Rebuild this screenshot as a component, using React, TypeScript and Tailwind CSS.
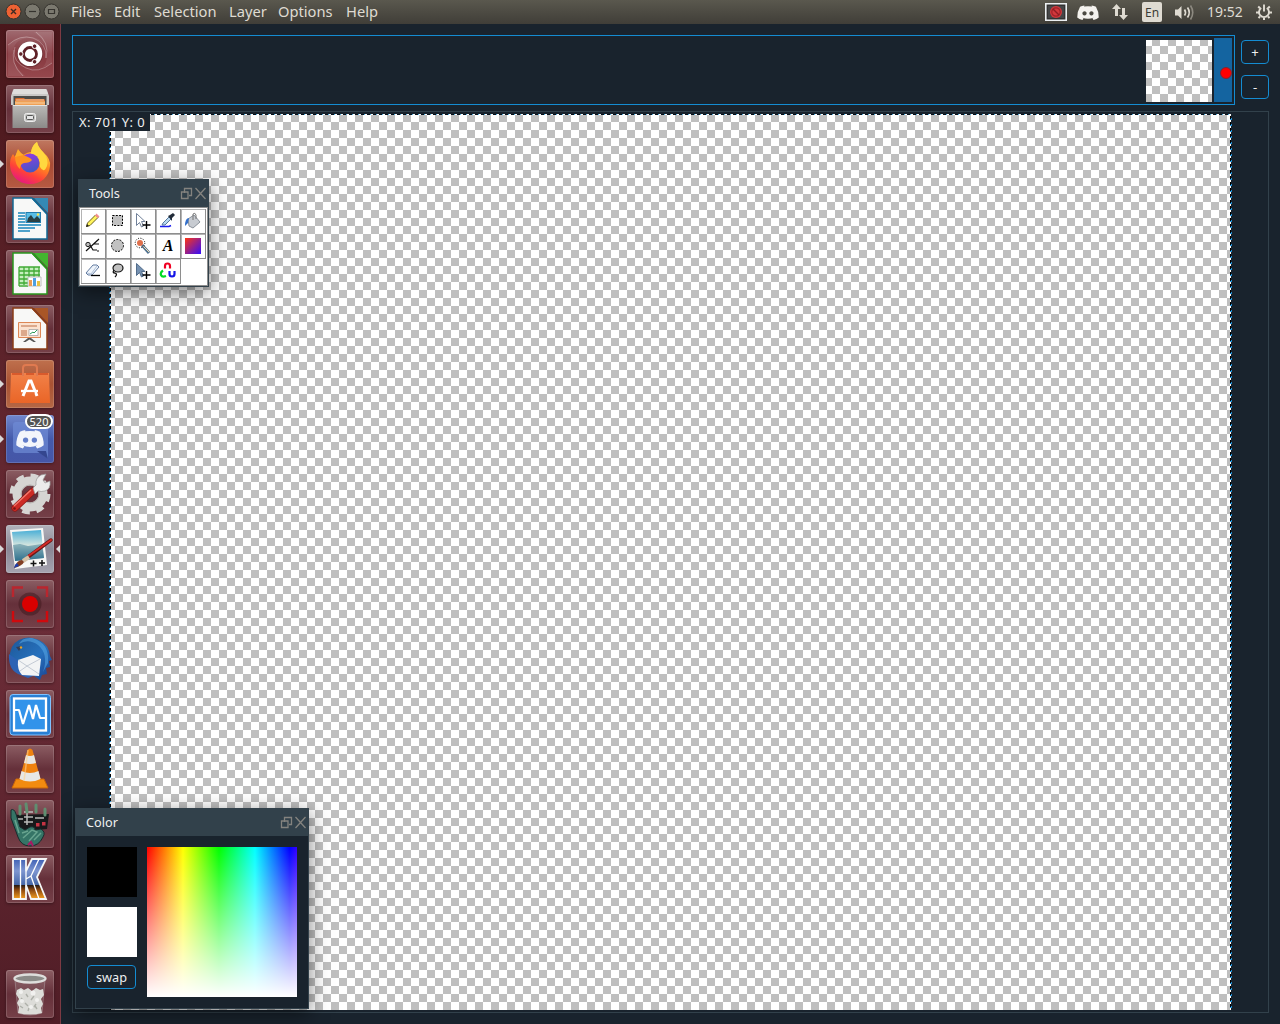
import React from "react";

const menus = [
  { label: "Files", w: "w-[43px]" },
  { label: "Edit", w: "w-[40px]" },
  { label: "Selection", w: "w-[75px]" },
  { label: "Layer", w: "w-[49px]" },
  { label: "Options", w: "w-[68px]" },
  { label: "Help", w: "w-[40px]" },
];

function Svg({ children, box = "0 0 48 48", className = "size-full" }: { children: React.ReactNode; box?: string; className?: string }) {
  return (
    <svg viewBox={box} className={className} fill="none">
      {children}
    </svg>
  );
}

function Ubuntu() {
  return (
    <Svg>
      <path d="M2 15Q12 5 24 7q16 1 17 17 0 9-4 13 8-2 9-4V2H28q9 7 12 15-7-10-18-9Q7 9 7 24q0 12 12 22H2z" fill="#fff" fillOpacity=".08" />
      <g stroke="#fff" strokeOpacity=".28" strokeWidth="1">
        <path d="M2 15Q14 4 27 8q14 5 13 20" />
        <path d="M46 33Q32 44 20 38 7 32 8 20" />
        <path d="M17 46Q3 33 9 17M30 2q14 10 10 26" />
      </g>
      <circle cx="24" cy="24.300" r="13" fill="#40191d" fillOpacity=".35" />
      <circle cx="24" cy="23.700" r="12.300" fill="#fff" />
      <circle cx="24" cy="24" r="6.500" stroke="#5e2027" strokeWidth="2.800" />
      <g fill="#5e2027" stroke="#fff" strokeWidth="1">
        <circle cx="14.800" cy="24" r="2.300" /><circle cx="28.600" cy="16.200" r="2.300" /><circle cx="28.600" cy="31.800" r="2.300" />
      </g>
    </Svg>
  );
}

function Drawer() {
  return (
    <Svg>
      <path d="M7 5q0-1 2-1h30q2 0 2 1l2 6v9H5v-9z" fill="#c9c8c6" />
      <path d="M6 9 8 4h32l2 5z" fill="#dfdedc" />
      <path d="M7.500 11h33v10h-33z" fill="#4c4c49" />
      <path d="M9 14q0-1 2-1h7l1 1h18q2 0 2 1v6H9z" fill="#d96a2c" />
      <path d="M9 16h30v5H9z" fill="#f0a055" /><path d="M9 18h30M10 15h28" stroke="#f8d2a6" />
      <path d="M6.500 20h35v23h-35z" fill="url(#drawerFront)" /><path d="M7 20.500h34" stroke="#e4e4e2" />
      <rect x="18.500" y="28.500" width="11" height="8" rx="2" fill="#c7c7c5" stroke="#eee" /><rect x="20.500" y="30.500" width="7" height="4" rx="1" fill="#e5e5e5" stroke="#555" />
      <defs><linearGradient id="drawerFront" x1="0" y1="0" x2="0" y2="1"><stop stopColor="#bbbab8" /><stop offset="1" stopColor="#8b8a88" /></linearGradient></defs>
    </Svg>
  );
}

function Firefox() {
  return (
    <Svg>
      <path d="M24 44C12 44 4 35 4 24q0-6 3-10l2 3 3-7 5 5q5-3 8-3 1-7 6-10 1 5 6 10 8 7 7 14C43 37 35 44 24 44z" fill="url(#foxFlame)" />
      <path d="M31 2q-6 5-6 12 10 3 9 13 4 7 7-1 2-7-4-14-5-5-6-10z" fill="#ffd83f" />
      <circle cx="24" cy="23" r="9.500" fill="url(#foxGlobe)" />
      <path d="M9 16q7-3 15 2l2 2q-2 3-8 3-4 1-4 6-5-4-5-13z" fill="#ff9420" />
      <path d="M12 9q2 4 6 6l-9 2z" fill="#ffad2a" />
      <defs>
        <linearGradient id="foxFlame" x1="34" y1="6" x2="15" y2="44" gradientUnits="userSpaceOnUse"><stop stopColor="#ffdd3c" /><stop offset=".4" stopColor="#ff8a20" /><stop offset=".7" stopColor="#ff4238" /><stop offset="1" stopColor="#e31587" /></linearGradient>
        <linearGradient id="foxGlobe" x1="0" y1="0" x2=".3" y2="1"><stop stopColor="#9a38e6" /><stop offset="1" stopColor="#4756c4" /></linearGradient>
      </defs>
    </Svg>
  );
}

function Doc({ edge, corner, children }: { edge: string; corner: string; children: React.ReactNode }) {
  return (
    <Svg>
      <path d="M7 3h19l15 16v25H7z" fill="#f8f8f7" stroke={edge} strokeWidth="1.500" />
      <path d="M28 3h14v15z" fill={corner} />
      <path d="M26 3v1l15 16v-2L28 3z" fill={edge} />
      {children}
    </Svg>
  );
}

function Writer() {
  return (
    <Doc edge="#126894" corner="#3489b5">
      <path d="M12 18h7M12 21h7M12 24h7M12 27h7M12 30h23M12 33h17M12 36h12" stroke="#1685bd" strokeWidth="1.300" />
      <rect x="20" y="17.500" width="14.500" height="10" fill="#58bde6" stroke="#217cad" /><path d="m21 27 1-4 3-3 3 4 3-3 3 3v3z" fill="#294044" /><circle cx="32" cy="19.500" r="1.200" fill="#ffe34a" />
    </Doc>
  );
}

function Calc() {
  return (
    <Doc edge="#2a961e" corner="#43b52f">
      <path d="M13 17h20v18H13z" fill="#c6efbd" /><path d="M13 17h21M13 21h21M13 25h21M13 29h12M13 33h12M13 36h9M13 17v19M18 17v18M23 17v18M28 17v10M33 17v10" stroke="#41aa36" strokeWidth="1.300" />
      <path d="M22 27h13v9H22z" fill="#fff" stroke="#bbb" /><path d="M23 30h3v6h-3z" fill="#ee9c54" /><path d="M27 28h3v8h-3z" fill="#4f9fe0" /><path d="M31 31h3v5h-3z" fill="#e8c145" />
    </Doc>
  );
}

function Impress() {
  return (
    <Doc edge="#8b3c17" corner="#a95626">
      <path d="M12.500 17.500h22v15h-22z" fill="#fbe2d0" stroke="#dd8755" /><path d="M15 21h16M15 26h6M15 28h6M15 30h6" stroke="#be6f46" strokeWidth="1.200" /><path d="M23 24.500h9v6h-9z" fill="#fff" stroke="#999" strokeWidth=".7" /><path d="m24 29 3-2 1 1 3-3" stroke="#2d9c57" /><path d="M22 33h3l5 4h-2.500l-4-2.500-4 2.500H17z" fill="#555" />
    </Doc>
  );
}

function Bag() {
  return (
    <Svg>
      <path d="M5 13h38l1 30H4z" fill="url(#bagFill)" /><path d="M17 16V8q0-3 3-3h8q3 0 3 3v8" stroke="#e07a50" strokeWidth="2" /><path d="M6 14h10m4 0h8m4 0h10" stroke="#d95a2c" strokeWidth="2" />
      <path d="m17 36 6-15h2l6 15" stroke="#fff" strokeWidth="3" /><path d="M15 31h17" stroke="#fff" strokeWidth="2.400" /><path d="M20 33h9" stroke="#e9733b" />
      <defs><linearGradient id="bagFill" x1="0" y1="0" x2="0" y2="1"><stop stopColor="#f28148" /><stop offset="1" stopColor="#e96527" /></linearGradient></defs>
    </Svg>
  );
}

function DiscordFace({ className }: { className: string }) {
  return (
    <svg viewBox="0 0 28 20" className={className}>
      <path fill="currentColor" fillRule="evenodd" d="M9.500 1 8.900 2.300q5-.8 10.200 0L18.500 1q3.400.4 5.600 1.800 3.800 6.200 3.600 13.500-2.500 2.400-6.600 3.200l-1.500-2.200 2-1q-7.600 3.200-15.200 0l2 1-1.500 2.200q-4.100-.8-6.600-3.200Q.1 9 3.900 2.800 6.100 1.400 9.500 1zM9.600 8.500c-3.600 0-3.600 5.300 0 5.300s3.600-5.300 0-5.300zm8.800 0c-3.600 0-3.600 5.300 0 5.300s3.600-5.300 0-5.300z" />
    </svg>
  );
}

function Discord() {
  return (
    <div className="relative size-full text-[#f3f5fb]">
      <Svg><path d="M8 7h31q3 0 3 3v34l-7-6H10q-3 0-3-3V10q0-3 3-3z" fill="#6f8cd6" fillOpacity=".7" /><path d="M31 36h9l2 8-7-5z" fill="#34468f" /></Svg>
      <DiscordFace className="absolute left-[10px] top-[14px] h-[20px] w-[28px]" />
      <div className="absolute left-[19px] top-[-1px] flex h-[15px] w-[28px] items-center justify-center rounded-full border-2 border-white bg-[#555553] text-[11px] leading-none text-white">520</div>
    </div>
  );
}

function Settings() {
  return (
    <Svg>
      <circle cx="24" cy="24" r="13" stroke="#d6d5d3" strokeWidth="9" /><circle cx="24" cy="24" r="18" stroke="#d6d5d3" strokeWidth="5" strokeDasharray="7.500 6.640" /><circle cx="24" cy="24" r="9" stroke="#b4b1ae" />
      <path d="m9 38 18-17" stroke="#8e1613" strokeWidth="7" strokeLinecap="round" /><path d="m9 38 18-17" stroke="#cc2b25" strokeWidth="5.500" strokeLinecap="round" /><path d="m8 36 17-16" stroke="#f3796c" strokeWidth="1.300" />
      <path d="m27 18 3-3q-1-7 5-10l5-1-3 6 2 3 5-2q1 8-5 10-4 1-7 0l-3 3z" fill="#ececeb" stroke="#999" strokeWidth=".7" /><circle cx="8.500" cy="38.500" r="1.300" fill="#771512" />
    </Svg>
  );
}

function PaintPicture() {
  return (
    <Svg>
      <path d="m4 5 33-2 4 37-32 4z" fill="#f7f7f5" /><path d="m6 7 29-2 3 28-29 3z" fill="url(#sea)" /><path d="m7 20 7-1 8 2 14-2 2 14-29 3z" fill="#34758f" fillOpacity=".5" />
      <path d="M22 32 45 15" stroke="#6d1816" strokeWidth="3.500" strokeLinecap="round" /><path d="M23 30.500 45 15" stroke="#d62c27" strokeWidth="1.800" strokeLinecap="round" />
      <path d="m17 36 6-4" stroke="#d6c3a9" strokeWidth="4" /><path d="M8 43q3-8 8-8l2 2q-2 4-10 6z" fill="#823e22" /><path d="M8 43q1-4 3-5l2 3z" fill="#1e3eac" />
      <path d="M24.500 38.500h6M27.500 35.500v6M33 38h6M36 35v6" stroke="#111" strokeWidth="1.500" />
      <defs><linearGradient id="sea" x1="0" y1="0" x2="0" y2="1"><stop stopColor="#4aafd6" /><stop offset=".5" stopColor="#d7e6df" /><stop offset="1" stopColor="#2b6a8b" /></linearGradient></defs>
    </Svg>
  );
}

function Recorder() {
  return (
    <Svg>
      <circle cx="24" cy="24" r="11.500" fill="#3e171c" fillOpacity=".5" /><circle cx="24" cy="24" r="8" fill="#d90000" /><path d="M7 17V7.500h10M31 7.500h10V17" stroke="#b9262e" strokeWidth="2.400" /><path d="M41 31v10H31M17 41H7V31" stroke="#cf0a0e" strokeWidth="2.400" />
    </Svg>
  );
}

function Thunderbird() {
  return (
    <Svg>
      <path d="M4 24Q3 10 13 5 22 0 33 5q10 5 11 16l2 4-3 1 1 6-4 1 1 6-5 1-2 5-6-4z" fill="url(#bird)" /><path d="M13 9q9-6 19 1 11 9 5 27l5-9Q44 8 26 3q-10-1-13 6z" fill="#5eb0ec" fillOpacity=".5" />
      <path d="M3 19q-1 15 9 20l10 4 10-4-12-8z" fill="#2c62b4" />
      <path d="m12 25 15-5 8 4-2 17-17-1q-5-5-4-15z" fill="#f3f4f5" /><path d="m12 25 9 6 13-7M14 36l7-5 12 8" stroke="#b7bfcb" strokeWidth=".8" /><path d="m10 12 6-1-3 5z" fill="#343d55" /><circle cx="15" cy="12.500" r="1.200" fill="#e6a52a" />
      <defs><linearGradient id="bird" x1="0" y1="0" x2="1" y2="1"><stop stopColor="#1d5798" /><stop offset=".55" stopColor="#2771bd" /><stop offset="1" stopColor="#173e8d" /></linearGradient></defs>
    </Svg>
  );
}

function Monitor() {
  return (
    <Svg>
      <rect x="4" y="4.500" width="40.500" height="40.500" rx="3" fill="#287fd4" stroke="#7fc2ff" /><rect x="8" y="8.500" width="32" height="32" fill="#3293ea" stroke="#fff" strokeWidth="2.300" /><path d="M8 20h5l4 14 6-19 4 14 3-14 4 13h6" stroke="#fff" strokeWidth="2.200" strokeLinejoin="bevel" />
    </Svg>
  );
}

function Cone() {
  return (
    <Svg>
      <path d="m10 34-4 9h36l-4-9z" fill="#f28b10" stroke="#c96508" /><path d="M21.500 5q2.500-3 5 0l8 29q-10.500 5-21 0z" fill="#ef8210" /><path d="m20 10-2 8q6 2 12 0l-2-8q-4 2-8 0zM15.500 26l-2 8q10.500 5 21 0l-2-8q-8.500 4-17 0z" fill="#e7e7e5" /><path d="m22 5-4 31" stroke="#ffd18d" strokeWidth="1.500" strokeOpacity=".6" />
    </Svg>
  );
}

function Hand() {
  return (
    <Svg>
      <path d="m5 15 38-1-2 15-27 2z" fill="#18191b" /><path d="M18 12h9M18 17h9M18 22h9M21 10v15M12 19h5M29 18h9" stroke="#b9bab9" strokeWidth="1.500" /><path d="M30 23h3.500v3.500H30zM36 22h3.500v3.500H36z" fill="#c63343" />
      <path d="M5 10q3-2 5 4l4 13 5 3 5-3q5-1 5 3l6-1q5 3 2 8-4 9-13 9-9 0-12-9L5 18z" fill="#357466" stroke="#182c2d" /><path d="M14 6v8M20 4l1 8M30 5v7M39 9v6" stroke="#608e70" strokeWidth="3" strokeLinecap="round" /><path d="m17 38 9-8 5 2-8 9M9 20l4 13M16 33l6-2M28 40l7-7" stroke="#68a48f" strokeWidth="1.500" /><path d="m22 45 3-3 2 4" stroke="#a61b62" strokeWidth="2" />
    </Svg>
  );
}

function LetterMark() {
  return (
    <Svg>
      <path d="M7 4h13v12l6-12h14l-9 18 9 22H25l-5-14v14H7z" fill="url(#markFill)" stroke="#f5f7f7" strokeWidth="1.800" /><path d="M14.500 4v40M20 16v14M20 24l5-3 8-17M25 21l8 23" stroke="#fff" strokeWidth="1.300" />
      <defs><linearGradient id="markFill" x1="0" y1="4" x2="0" y2="44" gradientUnits="userSpaceOnUse"><stop stopColor="#3f61b5" /><stop offset=".3" stopColor="#7d95d0" /><stop offset=".64" stopColor="#4768a8" /><stop offset=".65" stopColor="#201611" /><stop offset=".76" stopColor="#85430f" /><stop offset="1" stopColor="#f6a01f" /></linearGradient></defs>
    </Svg>
  );
}

function Trash() {
  return (
    <Svg>
      <path d="m9 10 3 33q12 4 24 0l3-33z" fill="#ddd" fillOpacity=".12" stroke="#ccc" strokeOpacity=".35" />
      <path d="m11 20 4-2 3 2 4-2 4 3 4-3 4 2 3-1 1 6-3 4 2 5-2 4 1 5q-12 3-24 0l1-6-2-4 2-4-3-5z" fill="#dcdcd8" />
      <path d="m20 24 2 3m6-1-3 4m-6 3 3 3m8-2-2 3m-13-9 2 2m12 6 2 3M14 36l3 2m6 0-1 3" stroke="#aeb0a9" strokeWidth="1.400" />
      <g fill="#f1f1ef"><circle cx="15" cy="22" r="2" /><circle cx="27" cy="23" r="2.500" /><circle cx="16" cy="31" r="2" /><circle cx="31" cy="30" r="2" /><circle cx="25" cy="37" r="2" /></g>
      <ellipse cx="24" cy="8.500" rx="15.500" ry="4" fill="#8b8b88" stroke="#dededc" strokeWidth="2.300" />
    </Svg>
  );
}

const glass = "bg-linear-to-b/srgb from-[#8b5d63] via-[#65303a] to-[#754048]";
const apps = [
  { icon: <Ubuntu />, bg: "bg-linear-to-b/srgb from-[#a06b71] via-[#86383f] to-[#96484d]" },
  { icon: <Drawer />, bg: glass },
  { icon: <Firefox />, bg: "bg-linear-to-b/srgb from-[#c07860] via-[#a84b35] to-[#b65a42]", run: true },
  { icon: <Writer />, bg: glass },
  { icon: <Calc />, bg: glass },
  { icon: <Impress />, bg: glass },
  { icon: <Bag />, bg: "bg-linear-to-b/srgb from-[#bf704d] via-[#a95233] to-[#b46745]", run: true },
  { icon: <Discord />, bg: "bg-linear-to-b/srgb from-[#7087cd] via-[#445aab] to-[#4656a7]", run: true },
  { icon: <Settings />, bg: glass },
  { icon: <PaintPicture />, bg: "bg-linear-to-b/srgb from-[#b2b2bb] via-[#8a8795] to-[#a6a4b0]", run: true, focus: true },
  { icon: <Recorder />, bg: glass },
  { icon: <Thunderbird />, bg: glass },
  { icon: <Monitor />, bg: glass },
  { icon: <Cone />, bg: glass },
  { icon: <Hand />, bg: glass },
  { icon: <LetterMark />, bg: glass },
];

function Tile({ icon, bg, run, focus }: { icon: React.ReactNode; bg: string; run?: boolean; focus?: boolean }) {
  return (
    <div className={"relative ml-[6px] size-12 shrink-0 rounded-[3px] shadow-[0_1px_3px_rgba(0,0,0,0.35),inset_0_0_0_1px_rgba(255,255,255,0.15)] " + bg}>
      {icon}
      {run && <span className="absolute -left-[6px] top-[20px] border-y-4 border-l-[4px] border-y-transparent border-l-[#d9d9d9]" />}
      {focus && <span className="absolute -right-[6px] top-[20px] border-y-4 border-r-[4px] border-y-transparent border-r-[#d9d9d9]" />}
    </div>
  );
}

function TopBar() {
  return (
    <header className="flex h-6 shrink-0 items-center bg-linear-to-b from-[#5a584e] to-[#403e38] pr-[7px] text-[14.7px] text-[#dfdbd2]">
      <div className="ml-[5px] flex gap-[2px] pb-px">
        <Svg box="0 0 17 17" className="size-[17px]"><circle cx="8.500" cy="8.500" r="7.500" fill="#ee6233" stroke="#35332e" /><path d="m6 6 5 5m0-5-5 5" stroke="#3c2b23" strokeWidth="1.400" /></Svg>
        <Svg box="0 0 17 17" className="size-[17px]"><circle cx="8.500" cy="8.500" r="7.500" fill="#7b796f" stroke="#35332e" /><path d="M5 8.500h7" stroke="#35332e" strokeWidth="1.200" /></Svg>
        <Svg box="0 0 17 17" className="size-[17px]"><circle cx="8.500" cy="8.500" r="7.500" fill="#7b796f" stroke="#35332e" /><path d="M5.500 6.500h6v4h-6z" stroke="#35332e" strokeWidth="1.200" /></Svg>
      </div>
      <nav className="ml-[11px] flex pb-[2px]">
        {menus.map((m) => <span key={m.label} className={"shrink-0 whitespace-nowrap " + m.w}>{m.label}</span>)}
      </nav>
      <div className="ml-auto flex items-center">
        <Svg box="0 0 22 18" className="h-[18px] w-[22px]"><path d="M.8.800h20.400v16.400H.800z" fill="#333" stroke="#eceff1" strokeWidth="1.600" /><path d="M3 3h16v12H3z" fill="#454647" /><circle cx="11" cy="9" r="6" fill="#d2383c" /><circle cx="11" cy="9" r="4.200" stroke="#a02228" strokeWidth="1.200" /><path d="m8 6 6 6" stroke="#8e1c22" strokeWidth="1.400" /></Svg>
        <DiscordFace className="ml-[10px] h-[17px] w-[22px] text-[#f4f2ee]" />
        <Svg box="0 0 18 18" className="ml-[12px] size-[18px]"><path d="M5.500 1 10 6H7v7H4V6H1zM12.500 17 8 12h3V5h3v7h3z" fill="#dfdbd2" /></Svg>
        <span className="ml-[13px] flex h-[20px] w-[20px] items-center justify-center rounded-[2px] bg-[#dfdbd2] pt-px text-[12px] text-[#3d3b36]">En</span>
        <Svg box="0 0 21 18" className="ml-[12px] h-[18px] w-[21px]"><path d="M1 6.500h3l3.500-3.500v13L4 12.500H1z" fill="#dfdbd2" /><path d="M10.500 6.500q2 3 0 6M13.500 4.500q3.500 5 0 10" stroke="#dfdbd2" strokeWidth="1.700" /><path d="M16.500 2.500q4.500 7 0 14" stroke="#8d8a81" strokeWidth="1.600" /></Svg>
        <span className="ml-[12px] w-[37px] whitespace-nowrap pb-[2px] text-[14px]">19:52</span>
        <Svg box="0 0 18 18" className="ml-[11px] size-[18px]"><path d="M6.200 5a5 5 0 1 0 5.600 0M9 1.500v7" stroke="#dfdbd2" strokeWidth="1.900" /><path d="M3.200 3.500 5 5.300M14.800 3.500 13 5.300M1 9.500h3M17 9.500h-3M3.500 15 5 13.500M14.500 15 13 13.500M9 17v-2" stroke="#dfdbd2" strokeWidth="2" /></Svg>
      </div>
    </header>
  );
}

const toolIcons: React.ReactNode[] = [
  <><path d="m2.500 14.500 1-3.500 8-8 2.500 2.500-8 8z" fill="#fff45c" stroke="#6c601c" /><path d="m11 3.500 1.500-2 3 3-2 1.500z" fill="#f28f8f" /><path d="m2 15 1-3 2 2z" fill="#222" /></>,
  <path d="M3.500 3.500h10v10h-10z" fill="#c1c1c1" stroke="#000" strokeDasharray="2 1.300" />,
  <><path d="M2.500 1.500v12l3-3 2 4.500 2-1-2-4.500h3.500z" fill="#fff" stroke="#718199" /><path d="M12.500 9v8M8.500 13h8" stroke="#000" strokeWidth="1.400" /></>,
  <><path d="m3 13 1-2 6-6 2 2-6 6z" fill="#b9d9f1" stroke="#54789d" /><path d="m9 4 2-1 3-2 2 2-3 3v3z" fill="#222c39" /><path d="M1 14.500h9l2-1" stroke="#1a1dee" strokeWidth="1.500" /></>,
  <><path d="m4 7 6-4 6 7-7 6-4-2z" fill="#c7cbd1" stroke="#8b929b" /><path d="M9 8V2q2-2 3 1v4" stroke="#777" /><path d="M5 6Q1 6 1 14l3-3z" fill="#3470ca" /></>,
  <><circle cx="4" cy="7.500" r="2.200" fill="#bbb" stroke="#222" /><path d="m2 14 13-12M6 8l3 5h4m0 1h2M10 7h5" stroke="#111" strokeWidth="1.200" /></>,
  <circle cx="8.500" cy="8.500" r="6" fill="#c1c1c1" stroke="#000" strokeDasharray="2 1.300" />,
  <><path d="m8 8 7 8" stroke="#537391" strokeWidth="3" /><path d="m9 9 6 6" stroke="#f4dfb0" /><circle cx="6" cy="6" r="4.800" stroke="#000" strokeDasharray="1 1.500" /><circle cx="6" cy="6" r="3" fill="#df704c" /></>,
  null,
  null,
  <><path d="m2 11 7-8q5-1 6 2l-7 8q-5 1-6-2z" fill="#eef4fb" stroke="#637ba0" /><path d="m3 11 4 1 6-8" stroke="#afc0d8" /><path d="M7 13.500h9" stroke="#000" strokeWidth="1.300" /></>,
  <><ellipse cx="9" cy="6" rx="5" ry="4" fill="#c1c1c1" stroke="#111" strokeWidth="1.200" /><path d="M5 8q-2 3 1 3 3 1 0 4" stroke="#111" strokeWidth="1.300" /></>,
  <><path d="M2.500 1.500v12l3-3 2 4.500 2-1-2-4.500h3.500z" fill="#7591b1" stroke="#536d8b" /><path d="M12.500 9v8M8.500 13h8" stroke="#000" strokeWidth="1.400" /></>,
  <><path d="M6 6.500V4q0-2.500 2.500-2.500T11 4v2.500" stroke="#f00022" strokeWidth="2.200" /><path d="M4 8.500Q1 10.500 2 13t5 1" stroke="#00dc24" strokeWidth="2.200" /><path d="M10.500 9v3q0 2.500 2.500 2.500T15.500 12V9" stroke="#1315e7" strokeWidth="2.200" /></>,
];

function TitleBar({ title, className }: { title: string; className: string }) {
  return (
    <div className={"flex shrink-0 items-center bg-[#32414b] pr-px text-[12.7px] text-[#eff0f1] " + className}>
      <span className="mr-auto">{title}</span>
      <Svg box="0 0 13 13" className="size-[13px]"><path d="M4.500 6V1.500h7v7H9M1.500 5H8v6.500H1.500z" stroke="#84837f" strokeWidth="1.300" /></Svg>
      <Svg box="0 0 13 13" className="ml-[1px] size-[13px]"><path d="m1.500 1 10 11m0-11-10 11" stroke="#84837f" strokeWidth="1.300" /></Svg>
    </div>
  );
}

function ToolsWindow() {
  return (
    <section className="absolute left-[17px] top-[155px] flex h-[108px] w-[131px] flex-col border border-[#32414b] bg-white shadow-[0_5px_18px_rgba(0,0,0,0.5)]">
      <TitleBar title="Tools" className="h-[27px] pl-[10px]" />
      <div className="flex-1 border border-[#8e8e8e] p-px">
        <div className="grid w-[125px] grid-cols-5">
          {toolIcons.map((icon, i) => (
            <div key={i} className="flex size-[25px] items-center justify-center border-b border-r border-[#8e8e8e] bg-white pb-px pr-px shadow-[inset_1px_1px_0_#b4b4b4]">
              {i === 8 ? <span className="pl-px font-['Liberation_Serif'] text-[16px] font-bold italic text-black">A</span> : i === 9 ? <span className="ml-px mt-px size-4 bg-linear-to-br/srgb from-[#ff3512] to-[#320cff]" /> : <Svg box="0 0 17 17" className="size-[17px]">{icon}</Svg>}
            </div>
          ))}
        </div>
      </div>
    </section>
  );
}

function ColorWindow() {
  return (
    <section className="absolute left-[14px] top-[784px] flex h-[201px] w-[234px] flex-col border border-[#32414b] bg-[#19232d] shadow-[0_5px_18px_rgba(0,0,0,0.5)]">
      <TitleBar title="Color" className="h-[27px] pl-[10px]" />
      <div className="flex gap-[10px] pl-[11px] pt-[11px]">
        <div className="w-[50px]">
          <div className="size-[50px] bg-black" />
          <div className="mt-[10px] size-[50px] bg-white" />
          <button className="mt-2 flex h-6 w-[49px] items-center justify-center rounded-[4px] border border-[#148cd2] pt-[2px] text-[12.7px] text-[#eff0f1]">swap</button>
        </div>
        <div className="size-[150px] bg-[linear-gradient(to_bottom,transparent,white),linear-gradient(to_right,#f00_0%,#ff0_24%,#0f0_48%,#0ff_72%,#00f_95%,#3300ff_100%)]" />
      </div>
    </section>
  );
}

const checker = "bg-[repeating-conic-gradient(#bfbfbf_0_25%,#fff_0_50%)] bg-[length:16px_16px] ";

export default function App() {
  return (
    <div className="flex h-[1024px] w-[1280px] flex-col overflow-hidden bg-[#19232d] font-['Noto_Sans',sans-serif]">
      <TopBar />
      <div className="flex min-h-0 flex-1">
        <aside className="flex w-[61px] shrink-0 flex-col gap-[7px] border-r border-[#7d3a43] bg-linear-to-b from-[#4a171b] via-[#6c2d38] via-60% to-[#501d26] pt-[6px]">
          {apps.map((a, i) => <Tile key={i} {...a} />)}
          <div className="mb-[6px] mt-auto"><Tile icon={<Trash />} bg={glass} /></div>
        </aside>
        <main className="relative flex min-w-0 flex-1 flex-col overflow-hidden pl-[11px] pr-[11px] pt-[11px] text-[#eff0f1]">
          <div className="flex h-[70px] shrink-0 gap-[6px]">
            <div className="flex w-[1163px] justify-end gap-[2px] border border-[#148cd2] pr-[2px] pt-[2px]">
              <div className={checker + "mt-[2px] h-[62px] w-[66px] bg-[position:-2px_-2px]"} />
              <div className="flex h-[64px] w-[18px] items-center justify-end bg-[#1464a0] pt-[5px]"><span className="size-[12px] shrink-0 rounded-full border border-[#7b2937] bg-[#ff0000]" /></div>
            </div>
            <div className="flex w-7 flex-col gap-[11px] pt-[5px]">
              <button className="h-6 rounded-[4px] border border-[#148cd2] text-[13px] leading-[22px]">+</button>
              <button className="h-6 rounded-[4px] border border-[#148cd2] text-[13px] leading-[22px]">-</button>
            </div>
          </div>
          <div className="relative mt-[6px] h-[902px] border border-[#32414b] pl-[36px] pt-[2px]">
            <div className={checker + "relative h-[896px] w-[1123px] bg-[position:-2px_0]"}>
              <div className="absolute inset-x-0 top-0 h-px bg-[repeating-linear-gradient(to_right,#071019_0_3px,#4eb4ec_3px_4px,#fff_4px_6px)]" />
              <div className="absolute inset-y-0 left-0 w-px bg-[repeating-linear-gradient(to_bottom,#19232d_0_4px,#1e8fd5_4px_6px)]" />
              <div className="absolute inset-y-0 left-px w-px bg-[repeating-linear-gradient(to_bottom,#000_0_3px,#1e8fd5_3px_4px,#fff_4px_6px)]" />
              <div className="absolute inset-y-0 right-px w-px bg-[repeating-linear-gradient(to_bottom,#fff_0_2px,#000_2px_5px,#1e8fd5_5px_6px)]" />
              <div className="absolute inset-y-0 right-0 w-px bg-[repeating-linear-gradient(to_bottom,#19232d_0_4px,#1e8fd5_4px_6px)]" />
            </div>
            <div className="absolute left-px top-px flex h-[18px] w-[76px] items-center bg-[#19232d] pl-[5px] pt-[2px] text-[13px] tracking-[0.38px]"><span className="whitespace-nowrap">X: 701 Y: 0</span></div>
          </div>
          <ToolsWindow />
          <ColorWindow />
        </main>
      </div>
    </div>
  );
}
